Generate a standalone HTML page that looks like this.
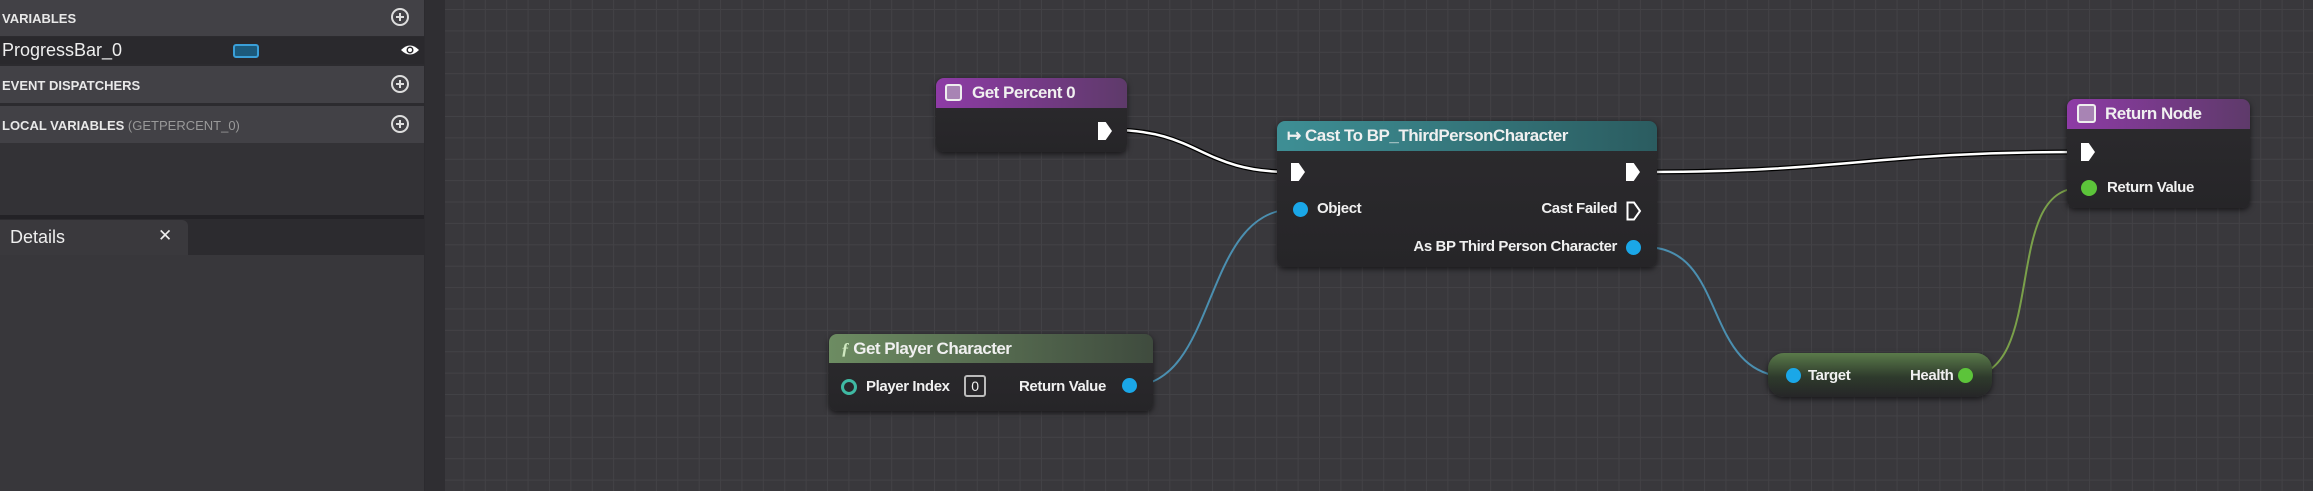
<!DOCTYPE html><html><head><style>
body{margin:0;width:2313px;height:491px;overflow:hidden;background:#39383c;font-family:"Liberation Sans",sans-serif;position:relative}
#grid{position:absolute;left:430px;top:0;right:0;bottom:0;background-color:#39383c;background-image:linear-gradient(#434246 1px,transparent 1px),linear-gradient(90deg,#434246 1px,transparent 1px);background-size:21.4px 21.4px;background-position:12px 9px}
#panel{position:absolute;left:0;top:0;width:425px;height:491px;background:#2c2b2f}
.hdr{position:absolute;left:0;width:424px;background:#424146;color:#e8e8e8;font-weight:bold;font-size:13px}
.hdr span{position:absolute;left:2px}
.plus{position:absolute;left:391px;width:18px;height:18px;border:2px solid #ddd;border-radius:50%;box-sizing:border-box}
.plus:before{content:"";position:absolute;left:3px;top:6px;width:8px;height:2px;background:#ddd}
.plus:after{content:"";position:absolute;left:6px;top:3px;width:2px;height:8px;background:#ddd}
.node{position:absolute;background:linear-gradient(#2c2b2e,#262528);border-radius:8px;box-shadow:0 2px 6px rgba(0,0,0,.6);color:#f0f0f0;font-size:15px;letter-spacing:-0.4px}
.nh{position:absolute;left:0;right:0;top:0;border-radius:8px 8px 0 0;font-weight:bold;font-size:17px;color:#f0f0f0;letter-spacing:-0.5px}
.t{position:absolute;white-space:nowrap}
.exec{position:absolute;width:14px;height:18px;background:#fff;clip-path:polygon(0 0,55% 0,100% 50%,55% 100%,0 100%)}
.dot{position:absolute;width:15px;height:15px;border-radius:50%}
svg{position:absolute;left:0;top:0}
</style></head><body>
<div id="grid"></div>
<div style="position:absolute;left:425px;top:0;width:20px;height:491px;background:#2f2e32"></div>
<div id="panel">
<div class="hdr" style="top:0;height:36px"><span style="top:11px">VARIABLES</span><div class="plus" style="top:8px"></div></div>
<div style="position:absolute;top:37px;left:0;width:424px;height:27px;background:#2a292d;color:#eee;font-size:18px"><span style="position:absolute;left:2px;top:3px">ProgressBar_0</span>
<div style="position:absolute;left:233px;top:7px;width:22px;height:10px;border:2px solid #3a9fd8;border-radius:3px;background:#1c5a7c"></div>
<svg style="left:400px;top:5px" width="20" height="16"><path d="M1 8 Q10 -1 19 8 Q10 17 1 8Z" fill="#fff"/><circle cx="10" cy="8" r="3.5" fill="#2a292d"/><circle cx="10" cy="8" r="2" fill="#fff"/></svg></div>
<div class="hdr" style="top:66px;height:37px"><span style="top:12px">EVENT DISPATCHERS</span><div class="plus" style="top:9px"></div></div>
<div class="hdr" style="top:106px;height:37px"><span style="top:12px">LOCAL VARIABLES <span style="position:static;color:#999;font-weight:normal">(GETPERCENT_0)</span></span><div class="plus" style="top:9px"></div></div>
<div style="position:absolute;top:143px;left:0;width:424px;height:72px;background:#333236"></div>
<div style="position:absolute;top:215px;left:0;width:424px;height:4px;background:#232226"></div>
<div style="position:absolute;top:220px;left:0;width:188px;height:35px;background:#3a393d;border-radius:0 6px 0 0;color:#eee;font-size:18px"><span style="position:absolute;left:10px;top:7px">Details</span><span style="position:absolute;left:158px;top:6px;font-size:17px">✕</span></div>
<div style="position:absolute;top:255px;left:0;width:424px;height:236px;background:#38373b"></div>
</div>
<svg width="2313" height="491">
<g fill="none">
<path d="M1112 130 C1200 130 1200 172 1290 172" stroke="#000" stroke-width="5"/>
<path d="M1112 130 C1200 130 1200 172 1290 172" stroke="#fff" stroke-width="2.5"/>
<path d="M1645 172 C1850 172 1870 152 2080 152" stroke="#000" stroke-width="5"/>
<path d="M1645 172 C1850 172 1870 152 2080 152" stroke="#fff" stroke-width="2.5"/>
<path d="M1130 386 C1220 386 1200 209 1295 209" stroke="#4b8fb0" stroke-width="2"/>
<path d="M1645 247 C1730 247 1700 377 1790 377" stroke="#4b8fb0" stroke-width="2"/>
<path d="M1965 377 C2050 377 2000 188 2080 188" stroke="#7aa04a" stroke-width="2"/>
</g></svg>
<div class="node" style="left:936px;top:78px;width:191px;height:74px">
<div class="nh" style="height:30px;background:linear-gradient(90deg,#8e3ba6,#5e3a6a)"><div style="position:absolute;left:9px;top:6px;width:17px;height:17px;border:2px solid #eee;border-radius:3px;background:#a884b4;box-sizing:border-box"></div><span class="t" style="left:36px;top:5px">Get Percent 0</span></div>
<div class="exec" style="left:162px;top:44px"></div></div>
<div class="node" style="left:1277px;top:121px;width:380px;height:146px">
<div class="nh" style="height:30px;background:linear-gradient(90deg,#3e8f95,#2b5c60)"><span class="t" style="left:10px;top:5px">↦ Cast To BP_ThirdPersonCharacter</span></div>
<div class="exec" style="left:14px;top:42px"></div><div class="exec" style="left:349px;top:42px"></div>
<div class="dot" style="left:16px;top:81px;background:#1aa7e8"></div><span class="t" style="left:40px;top:79px;font-weight:bold">Object</span>
<span class="t" style="right:40px;top:79px;font-weight:bold">Cast Failed</span>
<svg style="left:349px;top:80px" width="16" height="20"><path d="M1.5 1.5 H8 L14 10 L8 18.5 H1.5Z" fill="none" stroke="#fff" stroke-width="2"/></svg>
<span class="t" style="right:40px;top:117px;font-weight:bold">As BP Third Person Character</span>
<div class="dot" style="left:349px;top:119px;background:#1aa7e8"></div></div>
<div class="node" style="left:829px;top:334px;width:324px;height:77px">
<div class="nh" style="height:29px;background:linear-gradient(90deg,#6d8c62,#3f4b3e)"><span class="t" style="left:12px;top:5px"><i style="font-family:'Liberation Serif',serif;color:#cfe8c0">ƒ</i> Get Player Character</span></div>
<div class="dot" style="left:12px;top:45px;border:3px solid #3fb9a3;box-sizing:border-box;width:16px;height:16px"></div>
<span class="t" style="left:37px;top:44px;font-weight:bold">Player Index</span>
<div style="position:absolute;left:135px;top:41px;width:22px;height:22px;border:2px solid #bbb;border-radius:3px;box-sizing:border-box;font-size:14px;text-align:center;line-height:18px">0</div>
<span class="t" style="left:190px;top:44px;font-weight:bold">Return Value</span>
<div class="dot" style="left:293px;top:44px;background:#1aa7e8"></div></div>
<div class="node" style="left:1768px;top:353px;width:224px;height:44px;border-radius:16px;background:linear-gradient(#5a7a4a,#2e3a2c 55%,#262628)">
<div class="dot" style="left:18px;top:15px;background:#1aa7e8"></div><span class="t" style="left:40px;top:14px;font-weight:bold">Target</span>
<span class="t" style="left:142px;top:14px;font-weight:bold">Health</span><div class="dot" style="left:190px;top:15px;background:#5cc43a"></div></div>
<div class="node" style="left:2067px;top:99px;width:183px;height:109px">
<div class="nh" style="height:30px;background:linear-gradient(90deg,#8e3ba6,#5e3a6a)"><div style="position:absolute;left:10px;top:5px;width:19px;height:19px;border:2px solid #eee;border-radius:3px;background:#a884b4;box-sizing:border-box"></div><span class="t" style="left:38px;top:5px">Return Node</span></div>
<div class="exec" style="left:14px;top:44px"></div>
<div class="dot" style="left:14px;top:81px;background:#5cc43a;width:16px;height:16px"></div><span class="t" style="left:40px;top:80px;font-weight:bold">Return Value</span></div>
</body></html>
